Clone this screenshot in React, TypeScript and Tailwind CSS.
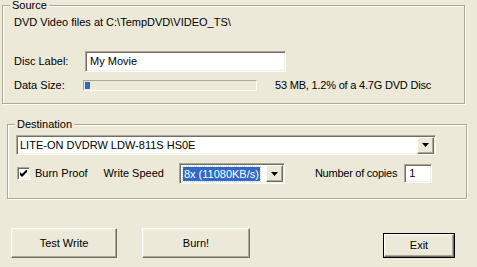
import React from "react";

const font = { fontFamily: '"Liberation Sans", Arial, sans-serif' };

function Group({ label, className, children }: { label: string; className: string; children: React.ReactNode }) {
  return (
    <div className={"relative border border-[#ACA899] shadow-[inset_1px_1px_0_#fff,1px_1px_0_#fff] " + className}>
      <span className="absolute left-[7px] top-[-7px] bg-[#ECE9D8] px-[2px] text-[11px] leading-[13px]">{label}</span>
      {children}
    </div>
  );
}

function Arrow() {
  return (
    <div className="flex h-[17px] w-[17px] items-center justify-center border border-t-white border-l-white border-r-[#716F64] border-b-[#716F64] bg-[#ECE9D8] shadow-[inset_-1px_-1px_0_#ACA899]">
      <svg width="7" height="4" viewBox="0 0 7 4">
        <path d="M0 0h7L3.5 4z" fill="#000" />
      </svg>
    </div>
  );
}

function Button({ label, className, def }: { label: string; className: string; def?: boolean }) {
  return (
    <div className={(def ? "border border-black " : "") + className}>
      <div className="flex h-full w-full items-center justify-center border border-t-white border-l-white border-r-[#716F64] border-b-[#716F64] bg-[#ECE9D8] text-[11px] shadow-[inset_-1px_-1px_0_#ACA899,inset_1px_1px_0_#F1EFE2]">
        {label}
      </div>
    </div>
  );
}

const sunken =
  "border border-t-[#ACA899] border-l-[#ACA899] border-r-white border-b-white shadow-[inset_1px_1px_0_#716F64,inset_-1px_-1px_0_#F1EFE2]";

export default function App() {
  return (
    <div className="h-[267px] w-[477px] overflow-hidden bg-[#ECE9D8] pt-[5px] text-[11px] leading-[13px] text-black" style={font}>
      <Group label="Source" className="ml-[2px] h-[99px] w-[463px]">
        <div className="ml-[11px] mt-[10px]">DVD Video files at C:\TempDVD\VIDEO_TS\</div>
        <div className="mt-[22px] flex items-center">
          <span className="ml-[11px] w-[71px]">Disc Label:</span>
          <div className={"h-[21px] w-[201px] bg-white pl-[4px] leading-[19px] " + sunken}>My Movie</div>
        </div>
        <div className="mt-[7px] flex items-center">
          <span className="ml-[11px] w-[69px]">Data Size:</span>
          <div className="h-[11px] w-[174px] border border-t-[#ACA899] border-l-[#ACA899] border-r-white border-b-white p-[1px]">
            <div className="h-full w-[5px] bg-[#316AC5]" />
          </div>
          <span className="ml-[18px] tracking-[-0.2px]">53 MB, 1.2% of a 4.7G DVD Disc</span>
        </div>
      </Group>

      <Group label="Destination" className="ml-[7px] mt-[20px] h-[75px] w-[460px]">
        <div className={"ml-[8px] mt-[10px] flex h-[20px] w-[420px] items-center justify-between bg-white pl-[3px] pr-[1px] " + sunken}>
          <span>LITE-ON DVDRW LDW-811S HS0E</span>
          <Arrow />
        </div>
        <div className="mt-[8px] flex h-[21px] items-center">
          <div className={"ml-[9px] flex h-[13px] w-[13px] items-center justify-center bg-white " + sunken}>
            <svg width="7" height="7" viewBox="0 0 7 7">
              <path d="M0 2v3l2 2 5-5V-1L2 4z" fill="#000" />
            </svg>
          </div>
          <span className="ml-[5px]">Burn Proof</span>
          <span className="ml-[16px]">Write Speed</span>
          <div className={"ml-[15px] flex h-[21px] w-[106px] items-center justify-between bg-white px-[1px] " + sunken}>
            <span className="ml-[2px] bg-[#316AC5] px-[1px] leading-[14px] text-white outline-1 outline-dotted outline-[#CBD5E7]">
              8x (11080KB/s)
            </span>
            <Arrow />
          </div>
          <span className="ml-[30px] tracking-[-0.25px]">Number of copies</span>
          <div className={"ml-[7px] h-[19px] w-[28px] bg-white pl-[4px] leading-[17px] " + sunken}>1</div>
        </div>
      </Group>

      <div className="mt-[29px] flex items-end">
        <Button label="Test Write" className="ml-[11px] h-[30px] w-[106px]" />
        <Button label="Burn!" className="ml-[25px] h-[30px] w-[108px]" />
        <Button label="Exit" def className="ml-[133px] h-[25px] w-[72px]" />
      </div>
    </div>
  );
}
